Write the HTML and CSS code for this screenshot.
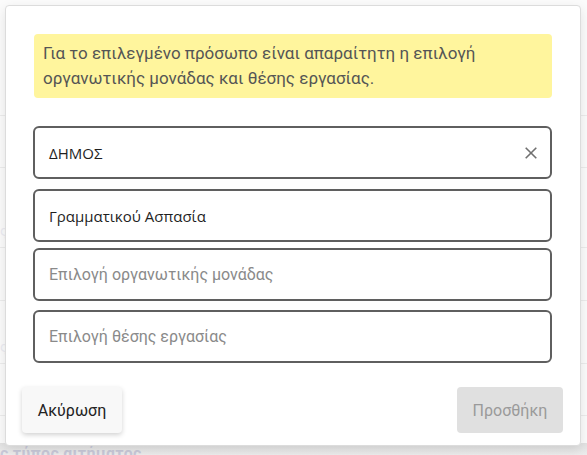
FILE: index.html
```html
<!DOCTYPE html>
<html lang="el">
<head>
<meta charset="utf-8">
<title>Προσθήκη</title>
<link rel="stylesheet" href="styles.css">
</head>
<body>
<div class="page">
  <div class="bg-row r1"></div>
  <div class="bg-row r2"></div>
  <div class="bg-row r3"><span class="bg-text">ς</span></div>
  <div class="bg-row r4"></div>
  <div class="bg-row r5"><span class="bg-text">ς</span></div>
  <div class="bg-row r6"></div>
  <div class="bg-foot">ς τύπος αιτήματος</div>
</div>
<div class="dialog">
  <div class="alert">Για το επιλεγμένο πρόσωπο είναι απαραίτητη η επιλογή οργανωτικής μονάδας και θέσης εργασίας.</div>
  <div class="field f1">
    <span class="value">ΔΗΜΟΣ</span>
    <svg class="clear" width="12" height="12" viewBox="0 0 12 12"><path d="M0.7 0.7L11.3 11.3M11.3 0.7L0.7 11.3" stroke="#707070" stroke-width="1.6" fill="none"/></svg>
  </div>
  <div class="field f2"><span class="value">Γραμματικού Ασπασία</span></div>
  <div class="field f3"><span class="placeholder">Επιλογή οργανωτικής μονάδας</span></div>
  <div class="field f4"><span class="placeholder">Επιλογή θέσης εργασίας</span></div>
  <div class="actions">
    <button class="btn cancel">Ακύρωση</button>
    <button class="btn add" disabled>Προσθήκη</button>
  </div>
</div>
</body>
</html>
```
FILE: styles.css
```css
html, body {
  margin: 0;
  padding: 0;
}
body {
  width: 587px;
  height: 455px;
  overflow: hidden;
  background: #fbfbfb;
  font-family: Roboto, "Liberation Sans", sans-serif;
  position: relative;
}
.page {
  display: flex;
  flex-direction: column;
  height: 455px;
}
.bg-row {
  border-bottom: 1px solid #ececec;
  box-sizing: border-box;
  position: relative;
  flex-shrink: 0;
}
.r1 { height: 116px; }
.r2 { height: 52px; }
.r3 { height: 80px; }
.r4 { height: 53px; }
.r5 { height: 63px; }
.r6 { height: 52px; }
.bg-text {
  position: absolute;
  left: 0;
  bottom: 8px;
  color: #ececf2;
  font-size: 14px;
}
.bg-foot {
  flex-shrink: 0;
  margin-top: 27px;
  color: #c9c9d9;
  font-size: 16px;
  font-weight: 700;
  background: linear-gradient(#e2e2e2, #f0f0f0 16px);
  line-height: 22px;
  letter-spacing: 0.3px;
}
.dialog {
  position: absolute;
  left: 5px;
  top: 5px;
  width: 576px;
  height: 441px;
  box-sizing: border-box;
  background: #fff;
  border: 1px solid #dcdcdc;
  border-radius: 4px;
  box-shadow: 0 4px 12px rgba(0,0,0,0.10);
  padding: 28px 28px 12px 27px;
  display: flex;
  flex-direction: column;
}
.alert {
  margin-left: 1px;
  background: #fff59d;
  border-radius: 4px;
  color: #555;
  font-size: 17px;
  line-height: 25px;
  padding: 7px 10px 7px 9px;
}
.field {
  height: 53px;
  box-sizing: border-box;
  border: 2px solid #5f5f5f;
  border-radius: 6px;
  display: flex;
  align-items: center;
  padding: 0 13px 0 14px;
  flex-shrink: 0;
}
.f1 { margin-top: 28px; justify-content: space-between; }
.f2 { margin-top: 10px; }
.f3 { margin-top: 6px; }
.f4 { margin-top: 9px; }
.value {
  font-family: "Open Sans", "Noto Sans", sans-serif;
  font-size: 15px;
  color: #1f1f1f;
}
.placeholder {
  font-family: Roboto, sans-serif;
  font-size: 16px;
  color: #8a8a8a;
}
.actions {
  margin-top: auto;
  display: flex;
  justify-content: space-between;
  margin-left: -11px;
  margin-right: -11px;
}
.btn {
  height: 46px;
  border: none;
  border-radius: 4px;
  font-family: Roboto, sans-serif;
  font-size: 16px;
  padding: 0;
}
.cancel {
  width: 100px;
  background: #f8f8f8;
  color: #222;
  box-shadow: 0 2px 5px rgba(0,0,0,0.18);
}
.add {
  width: 106px;
  background: #e0e0e0;
  color: #9a9a9a;
}
```
